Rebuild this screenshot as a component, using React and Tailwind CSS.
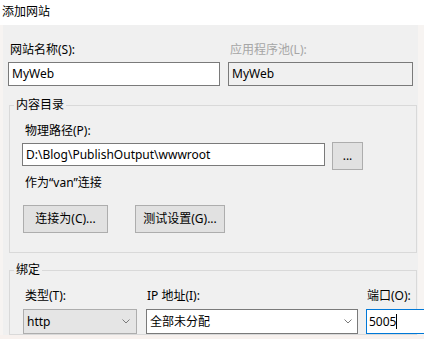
import React from "react";

const font = { fontFamily: '"Noto Sans", "Noto Sans CJK SC", sans-serif' };

function Chevron() {
  return (
    <svg width="8" height="5" viewBox="0 0 8 5" className="shrink-0">
      <polyline points="0.5,0.5 4,4 7.5,0.5" fill="none" stroke="#7a7a7a" strokeWidth="1" />
    </svg>
  );
}

export default function App() {
  return (
    <div
      className="w-[424px] h-[339px] overflow-hidden flex flex-col text-[12px] leading-[16px] text-black bg-[#f0f0f0] font-['Noto_Sans','Noto_Sans_CJK_SC',sans-serif]"
      style={font}
    >
      <div className="h-[25px] shrink-0 bg-white pl-[2px] pt-[4px]">添加网站</div>
      <div className="h-[310px] shrink-0 overflow-hidden bg-[linear-gradient(to_right,#f7f4f2_3px,#f0f0f0_3px,#f0f0f0_418px,#f7f4f2_418px)]">
        <div className="flex gap-[8px] pl-[8px] pt-[17px]">
          <div className="flex flex-col w-[212px]">
            <div className="ml-[2px] h-[16px]">网站名称(S):</div>
            <div className="mt-[4px] h-[24px] bg-white border border-[#7a7a7a] pl-[3px] flex items-center">MyWeb</div>
          </div>
          <div className="flex flex-col w-[185px]">
            <div className="ml-[2px] h-[16px] text-[#a6a6a6]">应用程序池(L):</div>
            <div className="mt-[4px] h-[24px] bg-[#f0f0f0] border border-[#7a7a7a] pl-[3px] flex items-center">MyWeb</div>
          </div>
        </div>

        <fieldset className="mt-[11px] ml-[9px] mr-[7px] border border-[#d9d9d9] p-0 m-0">
          <legend className="ml-[4px] px-[2px] h-[16px] leading-[16px]">内容目录</legend>
          <div className="pl-[12px] pt-[10px] pb-[19px] flex flex-col">
            <div className="ml-[3px] h-[16px]">物理路径(P):</div>
            <div className="mt-[3px] flex items-start">
              <div className="mt-[1px] w-[303px] h-[23px] bg-white border border-[#7a7a7a] pl-[3px] flex items-center whitespace-nowrap overflow-hidden">
                D:\Blog\PublishOutput\wwwroot
              </div>
              <div className="ml-[7px] w-[31px] h-[28px] bg-[#e1e1e1] border border-[#adadad] flex items-center justify-center">
                ...
              </div>
            </div>
            <div className="mt-[5px] ml-[3px] h-[16px]">作为“van”连接</div>
            <div className="mt-[14px] flex">
              <div className="ml-[1px] w-[85px] h-[28px] bg-[#e1e1e1] border border-[#adadad] flex items-center justify-center">
                连接为(C)...
              </div>
              <div className="ml-[27px] w-[90px] h-[28px] bg-[#e1e1e1] border border-[#adadad] flex items-center justify-center">
                测试设置(G)...
              </div>
            </div>
          </div>
        </fieldset>

        <fieldset className="mt-[9px] ml-[9px] mr-[7px] border border-[#d9d9d9] p-0 m-0 min-w-0">
          <legend className="ml-[4px] px-[2px] h-[16px] leading-[16px]">绑定</legend>
          <div className="pl-[13px] pt-[10px] flex gap-[9px]">
            <div className="flex flex-col w-[114px] shrink-0">
              <div className="ml-[2px] h-[16px]">类型(T):</div>
              <div className="mt-[5px] h-[25px] bg-[#e5e5e5] border border-[#adadad] pl-[3px] pr-[6px] flex items-center justify-between">
                <span>http</span>
                <Chevron />
              </div>
            </div>
            <div className="flex flex-col w-[212px] shrink-0">
              <div className="ml-[1px] h-[16px]">IP 地址(I):</div>
              <div className="mt-[5px] h-[25px] bg-white border border-[#7a7a7a] pl-[3px] pr-[5px] flex items-center justify-between">
                <span>全部未分配</span>
                <Chevron />
              </div>
            </div>
            <div className="flex flex-col w-[70px] shrink-0 ml-[-1px]">
              <div className="ml-[1px] h-[16px]">端口(O):</div>
              <div className="mt-[5px] h-[25px] bg-white border border-[#0078d7] pl-[2px] flex items-center">
                <span>5005</span>
                <span className="inline-block w-px h-[15px] bg-black" />
              </div>
            </div>
          </div>
        </fieldset>
      </div>
      <div className="flex-1 bg-[#f7f1ee]" />
    </div>
  );
}
